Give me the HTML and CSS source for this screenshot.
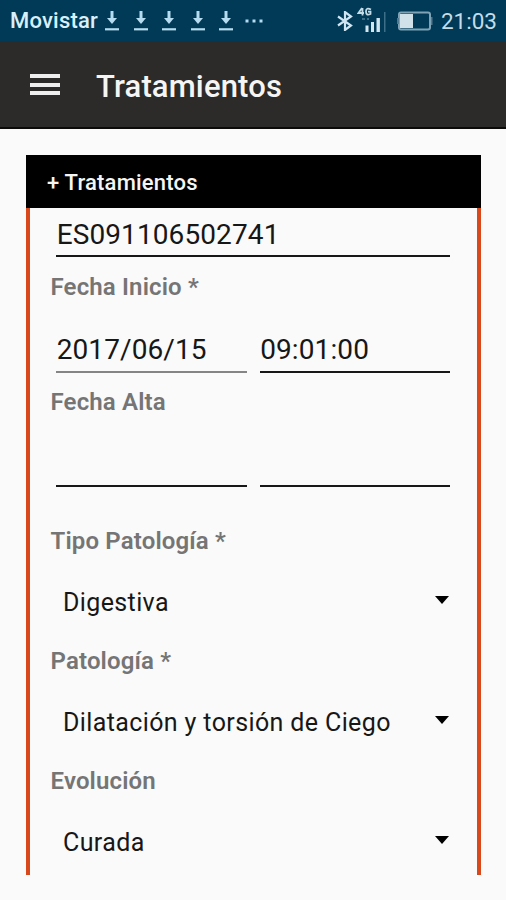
FILE: index.html
```html
<!DOCTYPE html>
<html lang="es">
<head>
<meta charset="utf-8">
<title>Tratamientos</title>
<link rel="stylesheet" href="styles.css">
</head>
<body>
<svg width="0" height="0" class="defs">
  <symbol id="download" viewBox="0 0 16 22"><path d="M8 1v9" stroke-width="3"/><path d="M3 8h10l-5 6z" class="solid"/><path d="M1 19.3h14" stroke-width="2.2"/></symbol>
</svg>
<div class="status">
  <span class="carrier">Movistar</span>
  <div class="downloads">
    <svg><use href="#download"/></svg><svg><use href="#download"/></svg><svg><use href="#download"/></svg><svg><use href="#download"/></svg><svg><use href="#download"/></svg>
  </div>
  <svg class="dots" viewBox="0 0 18 4"><path d="M.5.5h3v3h-3zM7.5.5h3v3h-3zM14.5.5h3v3h-3z"/></svg>
  <svg class="bluetooth" viewBox="0 0 16 20"><path d="M1 5.500l13 9-6 4.500V1l6 4.500-13 9"/></svg>
  <svg class="signal" viewBox="0 0 32 26">
    <path class="net" d="M5 2L1.500 7H7M5.500 2v7.500M14 3.500Q9 1 9 5.500T13.500 8V5.700H11"/>
    <path d="M8.500 19.500h3V26h-3zM14 16h3v10h-3zM19.500 12h3.400v14h-3.400z"/>
    <path class="dim" d="M27 6h1.500v20H27zM5 12h3v2H5zM10 12h2v2h-2z"/>
  </svg>
  <svg class="battery" viewBox="0 0 36 20"><rect x="2" y="1.500" width="31" height="17" rx="2"/><path d="M3 3h13v14H3z"/><path class="cap" d="M34 6h1.500v8H34zM0 7h2v6H0z"/></svg>
  <span class="clock">21:03</span>
</div>
<header class="bar">
  <div class="menu"><i></i><i></i><i></i></div>
  <h1>Tratamientos</h1>
</header>
<main class="card">
  <h2><span>+</span> Tratamientos</h2>
  <form class="body">
    <div class="fields first"><div class="field"><span>ES091106502741</span></div></div>
    <div class="label start"><span>Fecha Inicio *</span></div>
    <div class="fields"><div class="field muted"><span>2017/06/15</span></div><div class="field"><span>09:01:00</span></div></div>
    <div class="label end"><span>Fecha Alta</span></div>
    <div class="fields"><div class="field"></div><div class="field"></div></div>
    <div class="label type"><span>Tipo Patología *</span></div>
    <div class="select"><span>Digestiva</span><svg viewBox="0 0 14 8"><path d="M0 0h14L7 8z"/></svg></div>
    <div class="label"><span>Patología *</span></div>
    <div class="select"><span>Dilatación y torsión de Ciego</span><svg viewBox="0 0 14 8"><path d="M0 0h14L7 8z"/></svg></div>
    <div class="label"><span>Evolución</span></div>
    <div class="select"><span>Curada</span><svg viewBox="0 0 14 8"><path d="M0 0h14L7 8z"/></svg></div>
  </form>
</main>
</body>
</html>
```

FILE: styles.css
```css
* { box-sizing: border-box; }
body { margin: 0; height: 900px; overflow: hidden; background: #fafafa; font-family: Roboto, sans-serif; color: #171717; }
.defs { display: block; height: 0; }
.status { display: flex; align-items: center; height: 41px; padding: 0 9px 0 10px; background: #003a57; color: #d9effa; fill: #b5dcf1; }
.carrier { width: 94px; font-size: 22px; font-weight: 500; letter-spacing: .2px; }
.downloads { display: flex; gap: 12.500px; }
.downloads svg { width: 16px; height: 22px; stroke: #b5dcf1; }
.solid { stroke: none; }
.dots { width: 18px; height: 4px; margin-left: 11px; }
.bluetooth { width: 16px; height: 20px; margin-left: 74px; fill: none; stroke: #cfe6f2; stroke-width: 2.200; }
.signal { width: 32px; height: 26px; margin-left: 4px; margin-top: -4px; fill: #d2e6ef; }
.signal .net { fill: none; stroke: #c3dce7; stroke-width: 1.800; }
.signal .dim { fill: #3d6f88; }
.battery { width: 36px; height: 20px; margin-left: 8px; fill: #d0e1ea; }
.battery rect { fill: none; stroke: #7fa3b5; stroke-width: 2; }
.battery .cap { fill: #52798d; }
.clock { margin-left: auto; font-size: 22.500px; color: #c5dce8; }
.bar { display: flex; align-items: center; height: 88px; padding: 2px 0 0 30px; background: #2d2b29; border-bottom: 2px solid #0c0b0a; }
.menu { display: flex; flex-direction: column; gap: 4.500px; width: 30px; margin-right: 36px; margin-top: -1px; }
.menu i { height: 4px; background: #eee; }
h1, h2 { margin: 0; color: #f5f5f5; }
h1 { padding-top: 4px; font-size: 31px; font-weight: 500; line-height: 40px; letter-spacing: .15px; }
.card { width: 455px; height: 720px; margin: 26px 0 0 26px; }
h2 { height: 53px; padding-left: 21px; background: #000; font-size: 22px; font-weight: 500; line-height: 55px; letter-spacing: .2px; }
.body { height: 667px; padding: 0 27px 0 20px; border: solid #d8481b; border-width: 0 4px; }
.fields { display: flex; gap: 13px; height: 56px; padding: 0 0 0 6px; }
.first { height: 49px; }
.field { display: flex; align-items: center; flex: 1; padding: 11px 0 0 .7px; border-bottom: 2px solid #171717; font-size: 28px; letter-spacing: .1px; }
.first .field { padding-top: 6px; }
.muted { border-color: #858585; }
.label { display: flex; align-items: center; height: 60px; padding: 0 0 0 .5px; color: #757575; font-size: 24px; font-weight: 600; letter-spacing: .15px; }
.end { height: 58px; }
.type { margin-top: 24px; }
.select { display: flex; align-items: center; justify-content: space-between; height: 60px; padding: 2px 1.500px 0 13px; font-size: 25px; letter-spacing: .38px; }
.select svg { width: 14px; height: 8px; margin-top: -4px; fill: #000; }
```
